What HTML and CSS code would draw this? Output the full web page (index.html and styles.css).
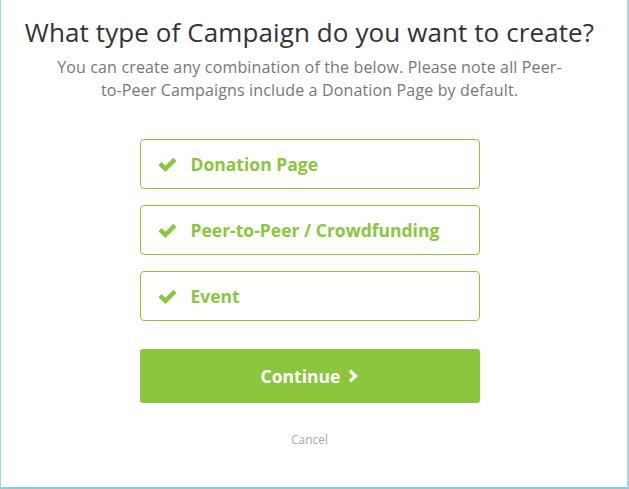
FILE: index.html
```html
<!DOCTYPE html>
<html>
<head>
<meta charset="utf-8">
<link rel="stylesheet" href="styles.css">
</head>
<body>
<div class="frame">
  <h1 class="title">What type of Campaign do you want to create?</h1>
  <p class="subtitle">You can create any combination of the below. Please note all Peer-<br>to-Peer Campaigns include a Donation Page by default.</p>
  <div class="options">
    <div class="option">
      <svg class="check" viewBox="0 0 18 14" width="19" height="15"><path d="M0.4 7.6 L3.4 4.6 L7 8.1 L14.5 0.6 L17.6 3.6 L7 14 Z" fill="#8cc63f"/></svg>
      <span>Donation Page</span>
    </div>
    <div class="option">
      <svg class="check" viewBox="0 0 18 14" width="19" height="15"><path d="M0.4 7.6 L3.4 4.6 L7 8.1 L14.5 0.6 L17.6 3.6 L7 14 Z" fill="#8cc63f"/></svg>
      <span>Peer-to-Peer / Crowdfunding</span>
    </div>
    <div class="option">
      <svg class="check" viewBox="0 0 18 14" width="19" height="15"><path d="M0.4 7.6 L3.4 4.6 L7 8.1 L14.5 0.6 L17.6 3.6 L7 14 Z" fill="#8cc63f"/></svg>
      <span>Event</span>
    </div>
  </div>
  <button class="continue">Continue <svg class="chev" viewBox="0 0 10 14" width="10" height="14"><path d="M1.8 1.6 L7.6 7 L1.8 12.4" fill="none" stroke="#fff" stroke-width="3.2"/></svg></button>
  <div class="cancel">Cancel</div>
</div>
</body>
</html>
```

FILE: styles.css
```css
html, body {
  margin: 0;
  padding: 0;
  background: #fff;
}
.frame {
  box-sizing: border-box;
  width: 629px;
  height: 489px;
  padding-right: 9px;
  border-left: 1px solid #a9d4e8;
  border-right: 2px solid #a9d4e8;
  border-bottom: 2px solid #8fc8e4;
  font-family: "Open Sans", "Liberation Sans", sans-serif;
  display: flex;
  flex-direction: column;
  align-items: center;
}
.title {
  margin: 14px 0 0 0;
  font-size: 26px;
  font-weight: 400;
  color: #333;
  line-height: 36px;
  letter-spacing: 0.1px;
  white-space: nowrap;
}
.subtitle {
  margin: 6px 0 0 0;
  text-align: center;
  font-size: 16px;
  line-height: 23px;
  color: #777;
  letter-spacing: 0.15px;
  white-space: nowrap;
}
.options {
  margin-top: 37px;
  display: flex;
  flex-direction: column;
  gap: 16px;
}
.option {
  box-sizing: border-box;
  width: 340px;
  height: 50px;
  border: 1px solid #8cc63f;
  border-radius: 4px;
  display: flex;
  align-items: center;
  padding-left: 17px;
  gap: 14px;
  color: #8cc63f;
  font-weight: 700;
  font-size: 17.5px;
}
.check {
  display: block;
}
.continue {
  margin-top: 28px;
  width: 340px;
  height: 54px;
  border: none;
  border-radius: 3px;
  background: #8cc63f;
  color: #fff;
  font-family: "Open Sans", "Liberation Sans", sans-serif;
  font-weight: 700;
  font-size: 17.5px;
  display: flex;
  align-items: center;
  justify-content: center;
  gap: 8px;
  padding: 0;
}
.cancel {
  margin-top: 28px;
  font-size: 12px;
  color: #aaa;
}
```
